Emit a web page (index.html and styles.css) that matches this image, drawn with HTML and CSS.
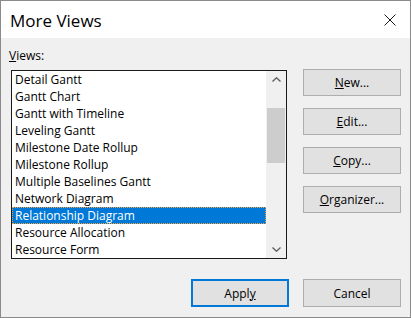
FILE: index.html
```html
<!DOCTYPE html>
<html>
<head>
<meta charset="utf-8">
<link rel="stylesheet" href="styles.css">
</head>
<body>
<div class="window">
  <div class="titlebar">
    <span class="title">More Views</span>
    <svg class="close" width="12" height="12" viewBox="0 0 12 12"><path d="M0.5 0.5 L11.5 11.5 M11.5 0.5 L0.5 11.5" stroke="#1a1a1a" stroke-width="1" fill="none"/></svg>
  </div>
  <div class="content">
    <div class="main">
      <div class="left">
        <div class="label"><u>V</u>iews:</div>
        <div class="listbox">
          <ul class="items">
            <li>Detail Gantt</li>
            <li>Gantt Chart</li>
            <li>Gantt with Timeline</li>
            <li>Leveling Gantt</li>
            <li>Milestone Date Rollup</li>
            <li>Milestone Rollup</li>
            <li>Multiple Baselines Gantt</li>
            <li>Network Diagram</li>
            <li class="selected">Relationship Diagram</li>
            <li>Resource Allocation</li>
            <li>Resource Form</li>
          </ul>
          <div class="scrollbar">
            <div class="arrow">
              <svg width="9" height="5" viewBox="0 0 9 5"><path d="M0.5 4.5 L4.5 0.8 L8.5 4.5" stroke="#606060" stroke-width="1.4" fill="none"/></svg>
            </div>
            <div class="track"><div class="thumb"></div></div>
            <div class="arrow">
              <svg width="9" height="5" viewBox="0 0 9 5"><path d="M0.5 0.5 L4.5 4.2 L8.5 0.5" stroke="#606060" stroke-width="1.4" fill="none"/></svg>
            </div>
          </div>
        </div>
      </div>
      <div class="side">
        <button class="btn"><u>N</u>ew...</button>
        <button class="btn"><u>E</u>dit...</button>
        <button class="btn"><u>C</u>opy...</button>
        <button class="btn"><u>O</u>rganizer...</button>
      </div>
    </div>
    <div class="footer">
      <button class="btn btn-default">Appl<u>y</u></button>
      <button class="btn">Cancel</button>
    </div>
  </div>
</div>
</body>
</html>
```
FILE: styles.css
```css
* { box-sizing: border-box; }
html, body { margin: 0; padding: 0; background: #f0f0f0; }
body {
  font-family: "Open Sans", "Noto Sans", sans-serif;
  font-size: 12px;
  color: #000;
}
.window {
  width: 411px;
  height: 318px;
  border: 1px solid #8a8a8a;
  background: #f0f0f0;
  display: flex;
  flex-direction: column;
}
.titlebar {
  height: 37px;
  background: #fff;
  display: flex;
  align-items: center;
  justify-content: space-between;
  padding: 0 14px 0 9px;
}
.title {
  font-size: 17px;
  color: #000;
  margin-top: 1px;
}
.close { display: block; margin-top: 1px; }
.content {
  flex: 1;
  display: flex;
  flex-direction: column;
  padding: 10px 9px 0 8px;
}
.main {
  display: flex;
  align-items: flex-start;
}
.left {
  display: flex;
  flex-direction: column;
}
.label {
  height: 16px;
  line-height: 16px;
  margin-bottom: 6px;
}
.listbox {
  margin-left: 2px;
  width: 276px;
  height: 189px;
  border: 1px solid #1a1a1a;
  background: #fff;
  display: flex;
}
.items {
  list-style: none;
  margin: 0;
  padding: 0;
  width: 254px;
}
.items li {
  height: 17px;
  line-height: 18px;
  padding-left: 3px;
  white-space: nowrap;
}
.items li.selected {
  background: #0078d7;
  color: #fff;
  border: 1px dotted #f5a33c;
  padding-left: 2px;
  line-height: 16px;
}
.scrollbar {
  width: 20px;
  background: #f0f0f0;
  display: flex;
  flex-direction: column;
}
.arrow {
  height: 17px;
  display: flex;
  align-items: center;
  justify-content: center;
}
.arrow svg { display: block; }
.track {
  flex: 1;
  padding-top: 20px;
}
.thumb {
  height: 55px;
  background: #cdcdcd;
  margin: 0 1px;
}
.side {
  margin-left: 16px;
  margin-top: 21px;
  display: flex;
  flex-direction: column;
  gap: 12px;
}
.btn {
  width: 98px;
  height: 27px;
  background: #e1e1e1;
  border: 1px solid #adadad;
  font-family: inherit;
  font-size: 12px;
  color: #000;
  padding: 0;
  margin: 0;
}
.footer {
  margin-top: 20px;
  display: flex;
  justify-content: flex-end;
  gap: 14px;
}
.footer .btn { height: 28px; }
.btn-default {
  border: 2px solid #0078d7;
}
```
